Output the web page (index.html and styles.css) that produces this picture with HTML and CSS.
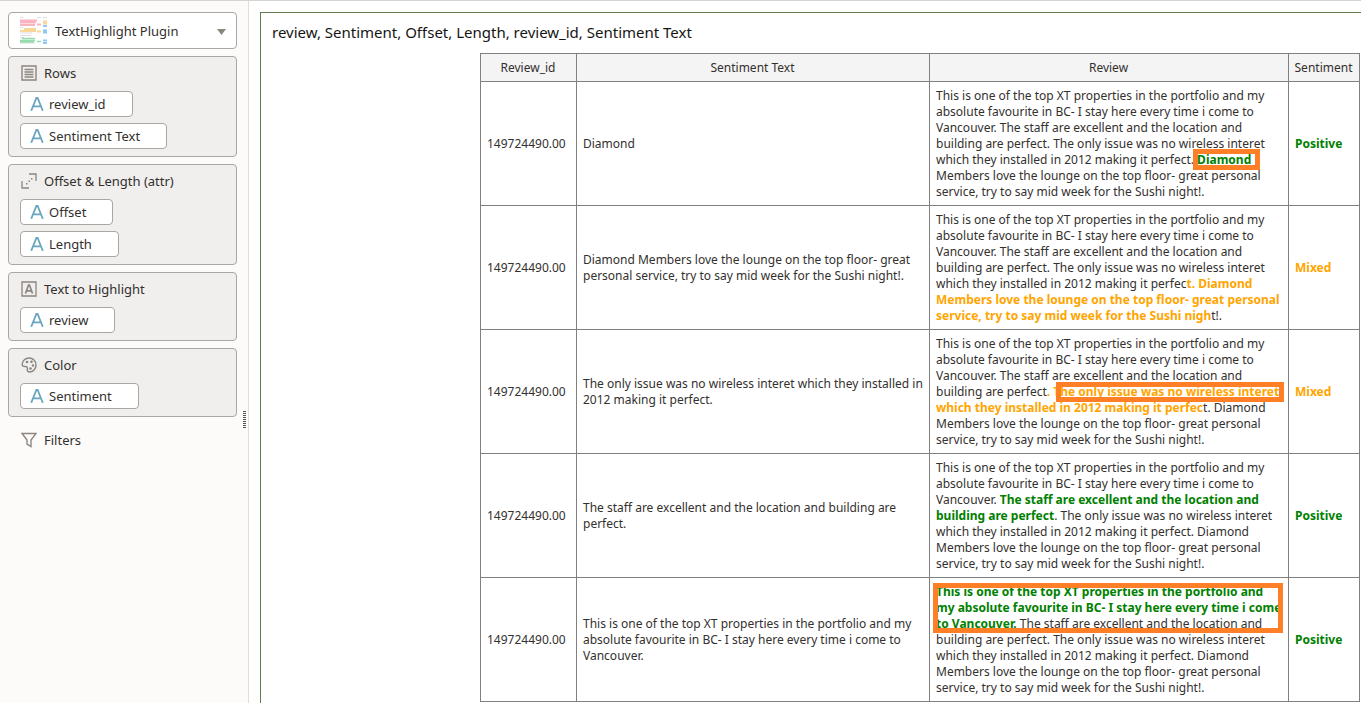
FILE: index.html
```html
<!DOCTYPE html>
<html lang="en">
<head>
<meta charset="utf-8">
<title>TextHighlight Plugin</title>
<link rel="stylesheet" href="styles.css">
</head>
<body>
<svg class="defs" aria-hidden="true">
  <symbol id="attr" viewBox="0 0 14 14"><path d="M1.200 13.800 6.400 1h1.200l5.200 12.800M3 9.300h8" fill="none" stroke="#6aa5bf" stroke-width="1.800"/></symbol>
</svg>
<div class="app">
  <aside class="sidebar">
    <div class="picker">
      <svg class="picker-icon" viewBox="0 0 28 28" aria-hidden="true">
        <path d="M0 .5h3M17 .5h4M23 .5h4M0 16h12M0 18.500h11M0 26h15M0 10.500h3M0 20.500h4" stroke="#dcdcdc" stroke-width="1"/>
        <path d="M0 3.500h17M0 5.500h16M0 8h15M17 7.500h4" stroke="#f9b4bf" stroke-width="1.900"/>
        <path d="M4 12h12M0 14h16M17 14.500h4M23 4.500h4M23 6.500h4" stroke="#f9d796" stroke-width="1.800"/>
        <path d="M2 21.500h13M0 23.500h15M0 25h14M17 24.500h4" stroke="#97dcb0" stroke-width="1.700"/>
        <path d="M23 9h4M23 13.500h4M23 15.500h4M23 23.500h4M23 26h4" stroke="#90c8f4" stroke-width="1.800"/>
      </svg>
      <select class="picker-select" aria-label="Visualization type"><option>TextHighlight Plugin</option></select>
      <svg class="picker-arrow" viewBox="0 0 9 6" aria-hidden="true"><path d="M0 0h9L4.500 6z" fill="#8b8580"/></svg>
    </div>

    <section class="card">
      <h2 class="card-title">
        <svg class="icon" viewBox="0 0 16 16" aria-hidden="true"><path d="M1 1h14v14H1zM3.500 4.500h9M3.500 7h9M3.500 9.500h9M3.500 12h9" fill="none" stroke="#8b8580" stroke-width="1.400"/></svg>
        Rows
      </h2>
      <button class="pill" type="button"><svg class="attr"><use href="#attr"/></svg>review_id</button>
      <button class="pill" type="button"><svg class="attr"><use href="#attr"/></svg>Sentiment Text</button>
    </section>

    <section class="card">
      <h2 class="card-title">
        <svg class="icon" viewBox="0 0 16 16" aria-hidden="true"><path d="M1 8v7h7M8 1h7v7" fill="none" stroke="#8b8580" stroke-width="1.300"/><path d="M5 10h1.500v1.500H5zM7.500 7.500H9V9H7.500zM10 5h1.500v1.500H10z" fill="#8b8580"/></svg>
        Offset &amp; Length (attr)
      </h2>
      <button class="pill" type="button"><svg class="attr"><use href="#attr"/></svg>Offset</button>
      <button class="pill" type="button"><svg class="attr"><use href="#attr"/></svg>Length</button>
    </section>

    <section class="card">
      <h2 class="card-title">
        <svg class="icon" viewBox="0 0 16 16" aria-hidden="true"><path d="M1 1h14v14H1z" fill="none" stroke="#8b8580" stroke-width="1.300"/><path d="M4.500 12.500 7.500 4h1l3 8.500M5.500 9.800h5" fill="none" stroke="#8b8580" stroke-width="1.700"/></svg>
        Text to Highlight
      </h2>
      <button class="pill" type="button"><svg class="attr"><use href="#attr"/></svg>review</button>
    </section>

    <section class="card">
      <h2 class="card-title">
        <svg class="icon" viewBox="0 0 16 16" aria-hidden="true"><path d="M1.200 7C1.500 3.500 4.500 1 8 1c4 0 7 3 7 7s-3 7-6.500 7c-1.500 0-2.500-1-2.200-2.300.4-1.500 0-3-1.500-3.200-1.300-.2-3.800.3-3.600-2.500z" fill="none" stroke="#8b8580" stroke-width="1.400"/><g fill="#8b8580"><circle cx="6" cy="5" r="1.300"/><circle cx="10.500" cy="4.800" r="1.300"/><circle cx="12" cy="8.500" r="1.200"/><circle cx="9.500" cy="11.500" r="1.300"/></g></svg>
        Color
      </h2>
      <button class="pill" type="button"><svg class="attr"><use href="#attr"/></svg>Sentiment</button>
    </section>

    <h2 class="filters">
      <svg class="icon" viewBox="0 0 16 16" aria-hidden="true"><path d="M1 1.500h14L10 8v6.500L6 12V8z" fill="none" stroke="#8b8580" stroke-width="1.400"/></svg>
      Filters
    </h2>
    <div class="grip"></div>
  </aside>

  <main class="canvas">
    <h1 class="title">review, Sentiment, Offset, Length, review_id, Sentiment Text</h1>
    <div class="table-wrap">
      <table class="grid">
        <colgroup><col class="col-id"><col class="col-text"><col><col class="col-sentiment"></colgroup>
        <thead><tr><th>Review_id</th><th>Sentiment Text</th><th>Review</th><th>Sentiment</th></tr></thead>
        <tbody>
          <tr>
            <td>149724490.00</td>
            <td>Diamond</td>
            <td><div class="review">This is one of the top XT properties in the portfolio and my absolute favourite in BC- I stay here every time i come to Vancouver. The staff are excellent and the location and building are perfect. The only issue was no wireless interet which they installed in 2012 making it perfect. <b class="positive">Diamond</b> Members love the lounge on the top floor- great personal service, try to say mid week for the Sushi night!.<span class="callout callout-word"></span></div></td>
            <td><b class="positive">Positive</b></td>
          </tr>
          <tr>
            <td>149724490.00</td>
            <td>Diamond Members love the lounge on the top floor- great personal service, try to say mid week for the Sushi night!.</td>
            <td><div class="review">This is one of the top XT properties in the portfolio and my absolute favourite in BC- I stay here every time i come to Vancouver. The staff are excellent and the location and building are perfect. The only issue was no wireless interet which they installed in 2012 making it perfec<b class="mixed">t. Diamond Members love the lounge on the top floor- great personal service, try to say mid week for the Sushi nigh</b>t!.</div></td>
            <td><b class="mixed">Mixed</b></td>
          </tr>
          <tr>
            <td>149724490.00</td>
            <td>The only issue was no wireless interet which they installed in 2012 making it perfect.</td>
            <td><div class="review">This is one of the top XT properties in the portfolio and my absolute favourite in BC- I stay here every time i come to Vancouver. The staff are excellent and the location and building are perfect<b class="mixed">. The only issue was no wireless interet which they installed in 2012 making it perfec</b>t. Diamond Members love the lounge on the top floor- great personal service, try to say mid week for the Sushi night!.<span class="callout callout-line"></span></div></td>
            <td><b class="mixed">Mixed</b></td>
          </tr>
          <tr>
            <td>149724490.00</td>
            <td>The staff are excellent and the location and building are perfect.</td>
            <td><div class="review">This is one of the top XT properties in the portfolio and my absolute favourite in BC- I stay here every time i come to Vancouver. <b class="positive">The staff are excellent and the location and building are perfect</b>. The only issue was no wireless interet which they installed in 2012 making it perfect. Diamond Members love the lounge on the top floor- great personal service, try to say mid week for the Sushi night!.</div></td>
            <td><b class="positive">Positive</b></td>
          </tr>
          <tr>
            <td>149724490.00</td>
            <td>This is one of the top XT properties in the portfolio and my absolute favourite in BC- I stay here every time i come to Vancouver.</td>
            <td><div class="review"><b class="positive">This is one of the top XT properties in the portfolio and my absolute favourite in BC- I stay here every time i come to Vancouver.</b> The staff are excellent and the location and building are perfect. The only issue was no wireless interet which they installed in 2012 making it perfect. Diamond Members love the lounge on the top floor- great personal service, try to say mid week for the Sushi night!.<span class="callout callout-block"></span></div></td>
            <td><b class="positive">Positive</b></td>
          </tr>
        </tbody>
      </table>
    </div>
  </main>
</div>
</body>
</html>
```
FILE: styles.css
```css
* { box-sizing: border-box; }

body {
  margin: 0;
  background: #fff;
  color: #33302e;
  font-family: "Noto Sans", "Open Sans", sans-serif;
  font-size: 13px;
}

.defs { display: none; }

.app {
  display: flex;
  min-height: 100vh;
  border-top: 1px solid #d6d2ce;
}

.sidebar {
  position: relative;
  flex: none;
  display: flex;
  flex-direction: column;
  gap: 7px;
  width: 249px;
  padding: 11px 11px 0 8px;
  background: #fcfbfa;
  border-right: 1px solid #dfdcd9;
}

.picker { position: relative; height: 37px; }

.picker-select {
  width: 100%;
  height: 37px;
  padding: 0 32px 0 46px;
  appearance: none;
  border: 1px solid #aaa6a2;
  border-radius: 4px;
  background: #fff;
  color: inherit;
  font: inherit;
}

.picker-icon {
  position: absolute;
  left: 12px;
  top: 5px;
  width: 28px;
  height: 28px;
}

.picker-arrow {
  position: absolute;
  right: 11px;
  top: 17px;
  width: 9px;
  height: 6px;
}

.card {
  display: flex;
  flex-direction: column;
  align-items: flex-start;
  gap: 6px;
  padding: 0 11px 7px;
  border: 1px solid #aaa6a2;
  border-radius: 4px;
  background: #f0efee;
}

.card-title,
.filters {
  display: flex;
  align-items: center;
  gap: 7px;
  margin: 0;
  font-size: 13px;
  font-weight: 400;
}

.card-title { height: 28px; padding: 4px 0 0 1px; }

.filters { height: 32px; padding-left: 13px; }

.icon { flex: none; width: 16px; height: 16px; }

.pill {
  display: flex;
  align-items: center;
  gap: 5px;
  height: 26px;
  padding: 0 26px 0 9px;
  border: 1px solid #aaa6a2;
  border-radius: 4px;
  background: #fff;
  color: inherit;
  font: inherit;
}

.attr { width: 14px; height: 14px; }

.grip {
  position: absolute;
  right: 2px;
  top: 410px;
  width: 3px;
  height: 18px;
  background: repeating-linear-gradient(#55514e 0 1px, transparent 1px 2px);
}

.canvas {
  flex: 1;
  min-width: 0;
  margin: 11px 0 0 11px;
  border: solid #5f7d4f;
  border-width: 1px 0 0 1px;
}

.title {
  margin: 0;
  padding: 7px 11px 9px;
  color: #161513;
  font-size: 15px;
  font-weight: 400;
  line-height: 24px;
}

.table-wrap { padding: 0 1px 0 219px; }

.grid {
  width: 100%;
  table-layout: fixed;
  border-collapse: collapse;
  font-size: 12px;
  line-height: 16px;
}

.col-id { width: 96px; }
.col-text { width: 353px; }
.col-sentiment { width: 71px; }

.grid th,
.grid td {
  padding: 6px 4px 5px 6px;
  border: 1px solid #808080;
  text-align: left;
}

.grid th {
  padding: 6px 5px 5px 4px;
  background: #f4f4f4;
  font-weight: 400;
  text-align: center;
}

.review { position: relative; }

.positive { color: #008000; }
.mixed { color: #ffa500; }

.callout {
  position: absolute;
  border: 5px solid #ff7f27;
}

.callout-word { left: 257px; top: 61px; width: 67px; height: 21px; }
.callout-line { left: 120px; top: 46px; width: 228px; height: 20px; }
.callout-block { left: -3px; top: -1px; width: 350px; height: 50px; }
```
